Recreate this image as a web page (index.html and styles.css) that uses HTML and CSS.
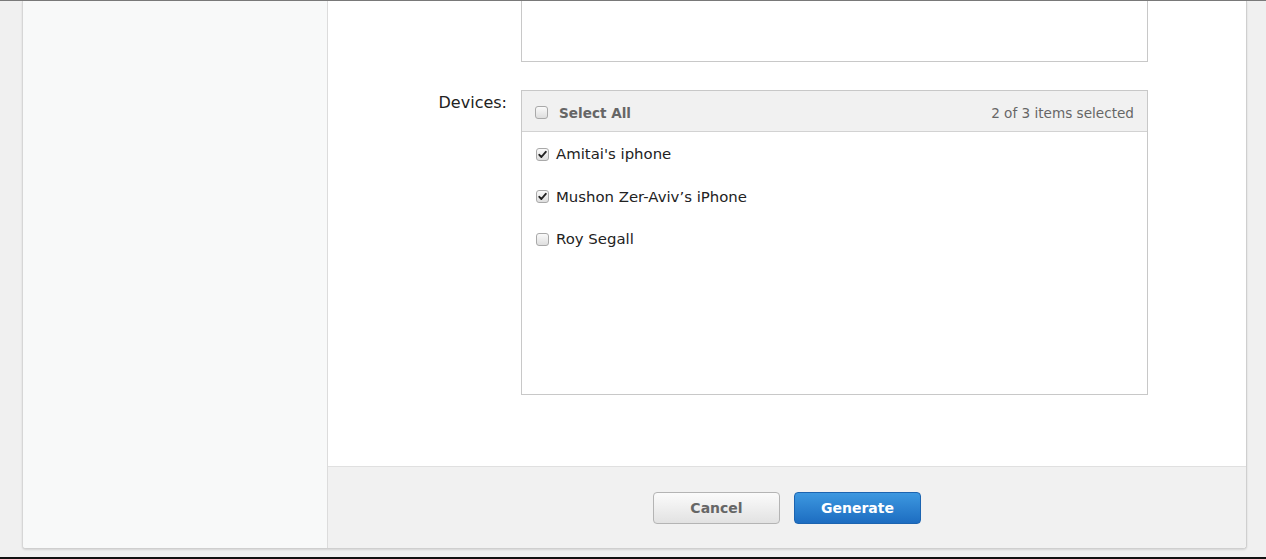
FILE: index.html
```html
<!DOCTYPE html>
<html>
<head>
<meta charset="utf-8">
<link rel="stylesheet" href="styles.css">
</head>
<body>
<div class="screen">
  <div class="top-line"></div>
  <div class="stage">
    <div class="card">
      <aside class="sidebar"></aside>
      <div class="content">
        <div class="form">
          <div class="row">
            <div class="label"></div>
            <div class="textarea"></div>
          </div>
          <div class="row devices-row">
            <div class="label">Devices:</div>
            <div class="listbox">
              <div class="list-head">
                <span class="check"></span>
                <span class="select-all">Select All</span>
                <span class="count">2 of 3 items selected</span>
              </div>
              <ul class="items">
                <li><span class="check checked"><svg viewBox="0 0 13 13" width="13" height="13"><path d="M3.3 6.8 L5.4 9 L9.8 3.8" fill="none" stroke="#222" stroke-width="1.9" stroke-linecap="round" stroke-linejoin="round"/></svg></span>Amitai's iphone</li>
                <li><span class="check checked"><svg viewBox="0 0 13 13" width="13" height="13"><path d="M3.3 6.8 L5.4 9 L9.8 3.8" fill="none" stroke="#222" stroke-width="1.9" stroke-linecap="round" stroke-linejoin="round"/></svg></span>Mushon Zer-Aviv’s iPhone</li>
                <li><span class="check"></span>Roy Segall</li>
              </ul>
            </div>
          </div>
        </div>
        <div class="footer">
          <button class="btn cancel">Cancel</button>
          <button class="btn primary">Generate</button>
        </div>
      </div>
    </div>
  </div>
  <div class="bottom-line"></div>
</div>
</body>
</html>
```

FILE: styles.css
```css
* { box-sizing: border-box; }
html, body { margin: 0; padding: 0; }
body {
  background: #f0f0f0;
  font-family: "DejaVu Sans", "Liberation Sans", sans-serif;
  color: #222;
}
.screen {
  height: 559px;
  display: flex;
  flex-direction: column;
  overflow: hidden;
}
.top-line { height: 1px; background: #7a7a7a; flex: none; }
.stage {
  flex: 1;
  padding: 0 19px 0 22px;
  display: flex;
  min-height: 0;
}
.card {
  flex: 1;
  height: 548px;
  display: flex;
  background: #fff;
  border-right: 1px solid #cfcfcf;
  border-bottom: 1px solid #cfcfcf;
  border-left: 1px solid #d6d6d6;
  border-radius: 0 0 4px 4px;
  box-shadow: 0 1px 2px rgba(0,0,0,0.12);
  overflow: hidden;
}
.sidebar {
  width: 305px;
  flex: none;
  background: #f8f9f9;
  border-right: 1px solid #dcdcdc;
}
.content {
  flex: 1;
  display: flex;
  flex-direction: column;
}
.form {
  flex: 1;
  display: flex;
  flex-direction: column;
  gap: 28px;
}
.row {
  display: flex;
  gap: 14px;
}
.label {
  width: 179px;
  flex: none;
  text-align: right;
  font-size: 16px;
  color: #222;
  padding-top: 3px;
}
.textarea {
  width: 627px;
  height: 61px;
  border: 1px solid #c8c8c8;
  border-top: none;
}
.listbox {
  width: 627px;
  height: 305px;
  border: 1px solid #c8c8c8;
}
.list-head {
  height: 41px;
  background: #f1f1f1;
  border-bottom: 1px solid #d2d2d2;
  display: flex;
  align-items: center;
  padding: 3px 13px 0 13px;
  font-size: 13.6px;
  color: #666;
}
.list-head .check { margin-top: -1px; }
.select-all {
  font-weight: bold;
  margin-left: 11px;
}
.count {
  margin-left: auto;
  color: #666;
}
.check {
  width: 13px;
  height: 13px;
  flex: none;
  border: 1px solid #a9a9a9;
  border-radius: 3px;
  background: linear-gradient(#fafafa, #dedede);
  display: inline-flex;
  align-items: center;
  justify-content: center;
  position: relative;
}
.check svg { position: absolute; left: -1px; top: -1px; }
.items {
  list-style: none;
  margin: 0;
  padding: 1px 0 0 14px;
}
.items li {
  height: 42.5px;
  display: flex;
  align-items: center;
  gap: 7px;
  font-size: 14.9px;
  color: #222;
}
.footer {
  height: 82px;
  flex: none;
  background: #f1f1f1;
  border-top: 1px solid #e0e0e0;
  display: flex;
  justify-content: center;
  align-items: flex-start;
  padding-top: 25px;
  gap: 14px;
}
.btn {
  width: 127px;
  height: 32px;
  border-radius: 4px;
  font-family: "DejaVu Sans", "Liberation Sans", sans-serif;
  font-size: 14px;
  font-weight: bold;
  padding-bottom: 2px;
  cursor: pointer;
}
.cancel {
  background: linear-gradient(#fbfbfb, #e2e2e2);
  border: 1px solid #b4b4b4;
  color: #666;
}
.primary {
  background: linear-gradient(#3d98e0, #1d6dc1);
  border: 1px solid #1c64b0;
  color: #fff;
}
.bottom-line {
  height: 2px;
  background: #111;
  flex: none;
  margin-top: auto;
}
```
